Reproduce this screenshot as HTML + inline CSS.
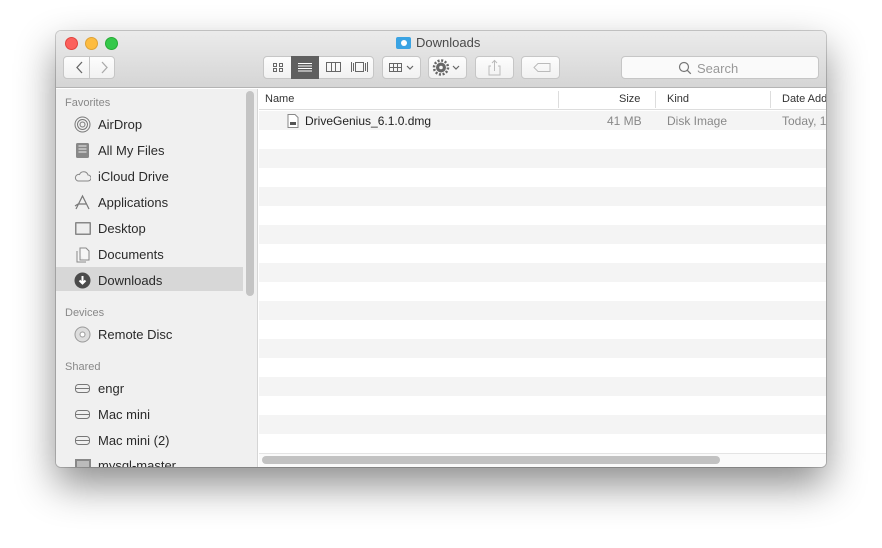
<!DOCTYPE html>
<html><head><meta charset="utf-8"><style>
*{margin:0;padding:0;box-sizing:border-box}
body{width:882px;height:548px;background:#fff;font-family:"Liberation Sans",sans-serif;position:relative;overflow:hidden}
span,div{white-space:nowrap}
.win{position:absolute;left:56px;top:31px;width:770px;height:436px;border-radius:5px;overflow:hidden;box-shadow:0 18px 40px rgba(0,0,0,.45),0 0 0 1px rgba(0,0,0,.18);background:#fff}
.tb{position:absolute;left:0;top:0;width:770px;height:57px;background:linear-gradient(#ebebeb,#d5d5d5);border-bottom:1px solid #b4b4b4}
.dot{position:absolute;top:6px;width:13px;height:13px;border-radius:50%}
.title{position:absolute;top:4px;font-size:13px;color:#4a4a4a}
.btn{position:absolute;top:25px;height:23px;background:linear-gradient(#fdfdfd,#f1f1f1);border:1px solid #c6c6c6;border-radius:4px}
.side{position:absolute;left:0;top:58px;width:202px;height:378px;background:#f0f0f0;border-right:1px solid #d5d5d5}
.sh{position:absolute;left:9px;font-size:11px;color:#888}
.si{position:absolute;left:42px;font-size:13px;color:#2a2a2a}
.ic{position:absolute;left:18px;width:17px;height:17px}
.main{position:absolute;left:203px;top:58px;width:567px;height:378px;overflow:hidden}
.hdr{position:absolute;left:0;top:0;width:567px;height:21px;background:#fff;border-bottom:1px solid #ddd;font-size:11px;color:#333;overflow:hidden}
.row{position:absolute;left:0;width:567px;height:19px;overflow:hidden}
.g{background:#f4f4f4}
.cell{position:absolute;top:3px;font-size:12px}
</style></head><body>
<div class="win">
<div class="tb">
 <div class="dot" style="left:9px;background:#fc605c;border:1px solid #e0443e"></div>
 <div class="dot" style="left:29px;background:#fdbc40;border:1px solid #dea236"></div>
 <div class="dot" style="left:49px;background:#34c84a;border:1px solid #27aa35"></div>
 <div style="position:absolute;left:340px;top:6px;width:15px;height:12px;background:#3aa3e3;border-radius:2px"></div>
 <div style="position:absolute;left:345px;top:9px;width:6px;height:6px;border-radius:50%;background:#fff"></div>
 <div class="title" style="left:360px">Downloads</div>
 <div class="btn" style="left:7px;width:52px"></div>
 <div style="position:absolute;left:33px;top:26px;width:1px;height:21px;background:#c6c6c6"></div>
 <svg style="position:absolute;left:7px;top:25px" width="52" height="23"><path d="M19 6l-5 5.5 5 5.5" stroke="#666" stroke-width="1.3" fill="none"/><path d="M39 6l5 5.5-5 5.5" stroke="#aaa" stroke-width="1.3" fill="none"/></svg>
 <div class="btn" style="left:207px;width:111px"></div>
 <div style="position:absolute;left:235px;top:25px;width:28px;height:23px;background:#5f5f5f"></div>
 <svg style="position:absolute;left:207px;top:25px" width="111" height="23">
  <g fill="none" stroke="#666" stroke-width="1"><rect x="10.5" y="7.5" width="3" height="3"/><rect x="16.5" y="7.5" width="3" height="3"/><rect x="10.5" y="12.5" width="3" height="3"/><rect x="16.5" y="12.5" width="3" height="3"/>
  <rect x="63.5" y="6.5" width="14" height="9"/><path d="M68.5 6.5v9M72.5 6.5v9"/><rect x="92.5" y="6.5" width="8" height="9"/><path d="M88.5 6v10M90.5 7v8M102.5 7v8M104.5 6v10"/></g>
  <path d="M35 7.5h14M35 10h14M35 12.5h14M35 15h14" stroke="#fff" stroke-width="1"/></svg>
 <div class="btn" style="left:326px;width:39px"></div>
 <svg style="position:absolute;left:326px;top:25px" width="39" height="23"><g fill="none" stroke="#666"><rect x="7.5" y="7.5" width="12" height="8"/><path d="M7.5 11.5h12M11.5 7.5v8M15.5 7.5v8"/><path d="M25 10l3 3 3-3" stroke-width="1.2"/></g></svg>
 <div class="btn" style="left:372px;width:39px"></div>
 <svg style="position:absolute;left:372px;top:25px" width="39" height="23"><circle cx="13" cy="11.5" r="5" fill="#666"/><circle cx="13" cy="11.5" r="7" fill="none" stroke="#666" stroke-width="2.5" stroke-dasharray="2 1.66"/><circle cx="13" cy="11.5" r="1.8" fill="#f5f5f5"/><path d="M25 10l3 3 3-3" stroke="#666" stroke-width="1.2" fill="none"/></svg>
 <div class="btn" style="left:419px;width:39px"></div>
 <svg style="position:absolute;left:419px;top:25px" width="39" height="23"><path d="M16 10h-2v9h11v-9h-2M19.5 15V4M17 7l2.5-2.5L22 7" stroke="#bbb" fill="none"/></svg>
 <div class="btn" style="left:465px;width:39px"></div>
 <svg style="position:absolute;left:465px;top:25px" width="39" height="23"><path d="M13 11.5l4-4h12v8H17z" stroke="#bbb" fill="none"/></svg>
 <div class="btn" style="left:565px;width:198px;background:#fafafa"></div>
 <svg style="position:absolute;left:622px;top:30px" width="14" height="14"><circle cx="6" cy="6" r="4.5" stroke="#777" fill="none" stroke-width="1.2"/><path d="M9.3 9.3l3.5 3.5" stroke="#777" stroke-width="1.3"/></svg>
 <div style="position:absolute;left:641px;top:30px;font-size:13px;color:#999">Search</div>
</div>
<div class="side">
 <div class="sh" style="top:8px">Favorites</div>
 <div style="position:absolute;left:0;top:178px;width:187px;height:24px;background:#d7d7d7"></div>
 <div style="position:absolute;left:190px;top:2px;width:8px;height:205px;border-radius:4px;background:#c4c4c4"></div>
 <svg class="ic" style="top:27px"><g fill="none" stroke="#777"><circle cx="8.5" cy="8.5" r="7.5"/><circle cx="8.5" cy="8.5" r="5"/><circle cx="8.5" cy="8.5" r="2.5"/></g></svg>
 <div class="si" style="top:28px">AirDrop</div>
 <svg class="ic" style="top:53px"><rect x="2" y="1" width="13" height="15" rx="1.5" fill="#888"/><path d="M4.5 4h8M4.5 7h8M4.5 10h8" stroke="#eee"/></svg>
 <div class="si" style="top:54px">All My Files</div>
 <svg class="ic" style="top:79px"><path d="M4 13h10a3 3 0 0 0 0-6a4.5 4.5 0 0 0-8.5-.5A3.2 3.2 0 0 0 4 13z" fill="none" stroke="#888"/></svg>
 <div class="si" style="top:80px">iCloud Drive</div>
 <svg class="ic" style="top:105px"><path d="M2 15L8.5 2 15 15M5 10h7M1 12l3-2" fill="none" stroke="#777" stroke-width="1.2"/></svg>
 <div class="si" style="top:106px">Applications</div>
 <svg class="ic" style="top:131px"><rect x="1" y="2" width="16" height="13" rx="1" fill="#888"/><rect x="2.5" y="3.5" width="13" height="10" fill="#eee"/></svg>
 <div class="si" style="top:132px">Desktop</div>
 <svg class="ic" style="top:157px"><path d="M3 5v11h9M6 2h6l3 3v9H6z" fill="#f6f6f6" stroke="#888"/></svg>
 <div class="si" style="top:158px">Documents</div>
 <svg class="ic" style="top:183px"><circle cx="8.5" cy="8.5" r="8" fill="#4a4a4a"/><path d="M8.5 4v7M5.5 8.5l3 3 3-3" stroke="#fff" stroke-width="2" fill="none"/></svg>
 <div class="si" style="top:184px">Downloads</div>
 <div class="sh" style="top:218px">Devices</div>
 <svg class="ic" style="top:237px"><circle cx="8.5" cy="8.5" r="7.5" fill="#ddd" stroke="#999"/><circle cx="8.5" cy="8.5" r="2.5" fill="#fff" stroke="#999"/></svg>
 <div class="si" style="top:238px">Remote Disc</div>
 <div class="sh" style="top:272px">Shared</div>
 <svg class="ic" style="top:291px"><rect x="1.5" y="4.5" width="14" height="8" rx="3" fill="none" stroke="#777"/><path d="M2 8.5h13" stroke="#777"/></svg>
 <div class="si" style="top:292px">engr</div>
 <svg class="ic" style="top:317px"><rect x="1.5" y="4.5" width="14" height="8" rx="3" fill="none" stroke="#777"/><path d="M2 8.5h13" stroke="#777"/></svg>
 <div class="si" style="top:318px">Mac mini</div>
 <svg class="ic" style="top:343px"><rect x="1.5" y="4.5" width="14" height="8" rx="3" fill="none" stroke="#777"/><path d="M2 8.5h13" stroke="#777"/></svg>
 <div class="si" style="top:344px">Mac mini (2)</div>
 <svg class="ic" style="top:369px"><rect x="1" y="1" width="16" height="14" fill="#888"/><rect x="3" y="3" width="12" height="10" fill="#bbb"/></svg>
 <div class="si" style="top:369px">mysql-master</div>
</div>
<div class="main">
 <div class="hdr">
  <span style="position:absolute;left:6px;top:4px">Name</span>
  <div style="position:absolute;left:299px;top:2px;width:1px;height:17px;background:#ddd"></div>
  <span style="position:absolute;left:360px;top:4px">Size</span>
  <div style="position:absolute;left:396px;top:2px;width:1px;height:17px;background:#ddd"></div>
  <span style="position:absolute;left:408px;top:4px">Kind</span>
  <div style="position:absolute;left:511px;top:2px;width:1px;height:17px;background:#ddd"></div>
  <span style="position:absolute;left:523px;top:4px">Date Added</span>
 </div>
 <div class="row g" style="top:22px">
  <svg style="position:absolute;left:28px;top:3px" width="12" height="14"><path d="M1 .5h7l3 3v10H1z" fill="#fff" stroke="#888"/><rect x="3" y="8" width="6" height="3" fill="#555"/></svg>
  <span class="cell" style="left:46px;color:#222">DriveGenius_6.1.0.dmg</span>
  <span class="cell" style="left:348px;color:#888">41 MB</span>
  <span class="cell" style="left:408px;color:#888">Disk Image</span>
  <span class="cell" style="left:523px;color:#888">Today, 1</span>
 </div>
 <div class="row g" style="top:60px"></div><div class="row g" style="top:98px"></div><div class="row g" style="top:136px"></div><div class="row g" style="top:174px"></div><div class="row g" style="top:212px"></div><div class="row g" style="top:250px"></div><div class="row g" style="top:288px"></div><div class="row g" style="top:326px"></div>
 <div style="position:absolute;left:0;top:364px;width:567px;height:14px;background:#fafafa;border-top:1px solid #e4e4e4"></div>
 <div style="position:absolute;left:3px;top:367px;width:458px;height:8px;border-radius:4px;background:#c2c2c2"></div>
</div>
</div>
</body></html>
